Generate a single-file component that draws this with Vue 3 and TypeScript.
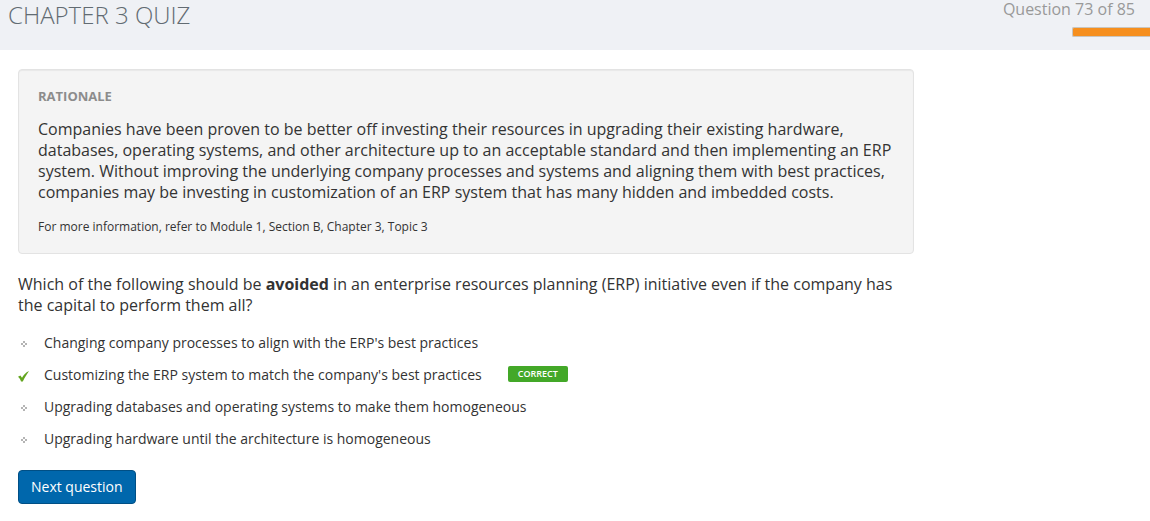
<script setup lang="ts">
interface Option {
  text: string
  correct: boolean
}

const current = 73
const total = 85

const options: Option[] = [
  { text: "Changing company processes to align with the ERP's best practices", correct: false },
  { text: "Customizing the ERP system to match the company's best practices", correct: true },
  { text: 'Upgrading databases and operating systems to make them homogeneous', correct: false },
  { text: 'Upgrading hardware until the architecture is homogeneous', correct: false },
]
</script>

<template>
  <div class="page">
    <header class="top">
      <h1>CHAPTER 3 QUIZ</h1>
      <div class="status">
        <span class="count">Question {{ current }} of {{ total }}</span>
        <div class="bar" role="progressbar" :aria-valuenow="current" :aria-valuemax="total"></div>
      </div>
    </header>

    <main class="content">
      <section class="rationale">
        <h2>RATIONALE</h2>
        <p>
          Companies have been proven to be better off investing their resources in upgrading their
          existing hardware, databases, operating systems, and other architecture up to an
          acceptable standard and then implementing an ERP system. Without improving the underlying
          company processes and systems and aligning them with best practices, companies may be
          investing in customization of an ERP system that has many hidden and imbedded costs.
        </p>
        <p class="more">For more information, refer to Module 1, Section B, Chapter 3, Topic 3</p>
      </section>

      <p class="question">
        Which of the following should be <strong>avoided</strong> in an enterprise resources
        planning (ERP) initiative even if the company has the capital to perform them all?
      </p>

      <ul class="options">
        <li v-for="option in options" :key="option.text">
          <svg v-if="option.correct" class="mark" viewBox="0 0 12 12" aria-hidden="true">
            <path d="M0 6.8 2.4 5.6 4 7.8C5.6 5 7.6 2.6 11 1 8.8 4.4 6.8 7.4 4.8 11.4H3C2.4 9.6 1.4 8 0 6.8Z" fill="#63a51f" />
          </svg>
          <svg v-else class="mark" viewBox="0 0 12 12" aria-hidden="true">
            <path d="M5 3h2v2H5zM3 5h2v2H3zM7 5h2v2H7zM5 7h2v2H5z" fill="#b4b4b4" />
          </svg>
          <span>{{ option.text }}</span>
          <span v-if="option.correct" class="badge">CORRECT</span>
        </li>
      </ul>

      <button type="button" class="next">Next question</button>
    </main>
  </div>
</template>

<style>
body {
  background: #fff;
}
</style>

<style scoped>
.page {
  font-family: "Open Sans", "Noto Sans", sans-serif;
  font-size: 16px;
  line-height: 21px;
  color: #333;
}

.top {
  display: flex;
  justify-content: space-between;
  box-sizing: border-box;
  min-height: 50px;
  padding-left: 8px;
  background: #eff1f5;
}

h1 {
  margin: 0;
  font-size: 24px;
  line-height: 30px;
  font-weight: 300;
  color: #626b72;
}

.status {
  display: flex;
  flex-direction: column;
  align-items: flex-end;
  gap: 8px;
  color: #999;
}

.count {
  line-height: 19px;
  padding-right: 15px;
}

.bar {
  box-sizing: border-box;
  width: 78px;
  height: 10px;
  border: 1px solid #c9c5bd;
  border-right: 0;
  border-radius: 2px 0 0 2px;
  background: #f68f1e;
}

.content {
  max-width: 896px;
  padding: 19px 18px;
}

.rationale {
  padding: 18px 19px 16px;
  border: 1px solid #e3e3e3;
  border-radius: 4px;
  background: #f4f4f4;
  box-shadow: inset 0 1px 1px rgba(0, 0, 0, 0.05);
}

h2 {
  margin: 0 0 15px;
  font-size: 13px;
  line-height: 16px;
  font-weight: 700;
  color: #8c8c8c;
}

.rationale p {
  margin: 0;
}

.rationale .more {
  margin-top: 13px;
  font-size: 12px;
}

.question {
  margin: 20px 0 10px;
}

.options {
  margin: 0 0 16px;
  padding: 0;
  list-style: none;
  font-size: 14px;
}

.options li {
  display: flex;
  align-items: center;
  min-height: 32px;
}

.mark {
  width: 12px;
  height: 12px;
  margin: 4px 14px 0 0;
  flex: none;
}

.badge {
  margin-left: 26px;
  padding: 0 10px;
  border-radius: 2px;
  background: #43a828;
  color: #fff;
  font-size: 9px;
  line-height: 16px;
  font-weight: 600;
}

.next {
  padding: 6px 12px;
  border: 1px solid #004f85;
  border-radius: 4px;
  background: #0067ac;
  color: #fff;
  font-family: inherit;
  font-size: 14px;
  line-height: 20px;
}
</style>
